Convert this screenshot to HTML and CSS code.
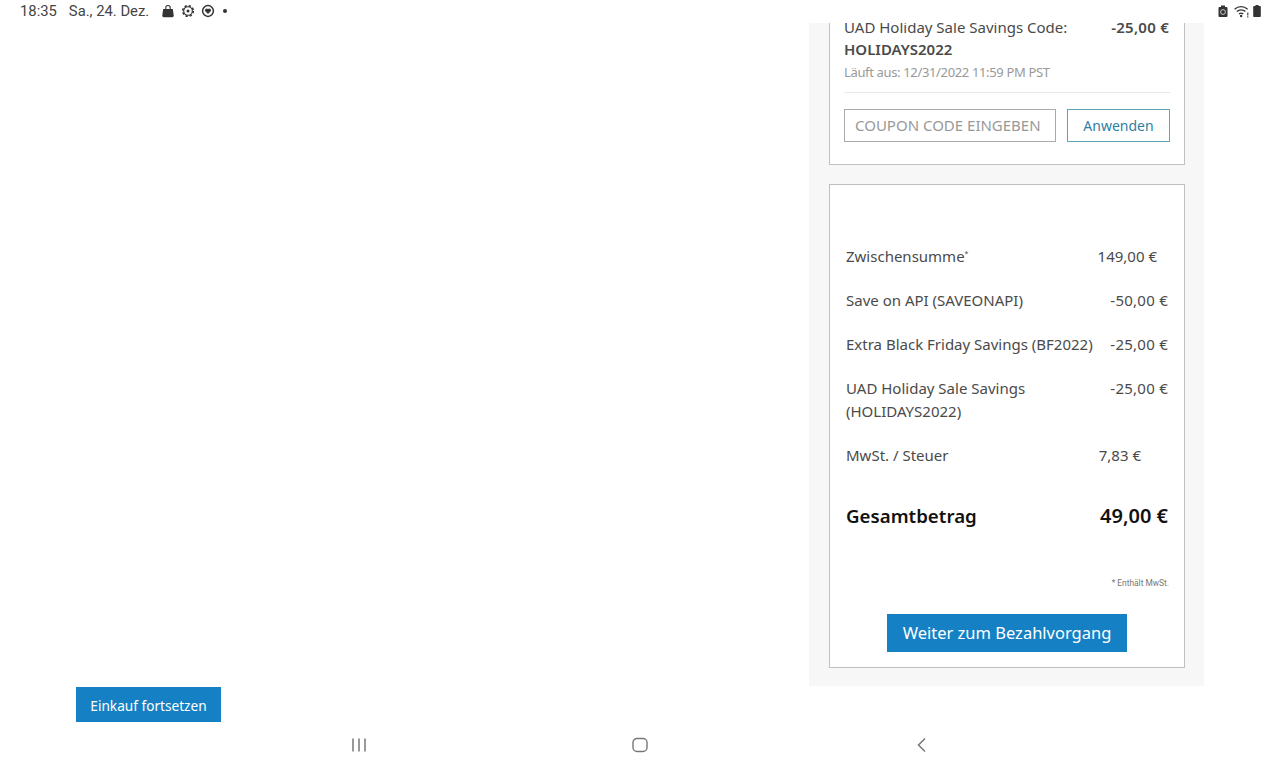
FILE: index.html
```html
<!DOCTYPE html>
<html lang="de">
<head>
    <meta charset="UTF-8">
    <title>Warenkorb</title>
    <link rel="stylesheet" href="styles.css">
</head>
<body>
    <div class="status-bar">
        <div class="status-left">
            <span class="clock">18:35</span>
            <span class="date">Sa., 24. Dez.</span>
            <div class="status-icons">
                <svg width="14" height="14" viewBox="0 0 14 14"><path d="M2.200 5h9.600l.9 6.500q.2 1.700-1.500 1.700H2.800q-1.700 0-1.500-1.700z" fill="#333"/><path d="M4.800 6V3.700a2.200 2.200 0 0 1 4.400 0V6" fill="none" stroke="#333" stroke-width="1.100"/></svg>
                <svg width="14" height="14" viewBox="0 0 14 14"><circle cx="7" cy="7" r="5.300" fill="none" stroke="#333" stroke-width="1.600" stroke-dasharray="2.300 1.860"/><circle cx="7" cy="7" r="4.300" fill="none" stroke="#333" stroke-width="1.100"/><circle cx="7" cy="7" r="1.500" fill="#333"/></svg>
                <svg width="14" height="14" viewBox="0 0 14 14"><circle cx="7" cy="7" r="5.400" fill="none" stroke="#333" stroke-width="1.500"/><path d="M7 10 4.300 7.300a1.600 1.600 0 0 1 2.700-2 1.600 1.600 0 0 1 2.700 2z" fill="#333"/></svg>
                <span class="status-dot"></span>
            </div>
        </div>
        <div class="status-right">
            <svg class="alarm-icon" width="12" height="14" viewBox="0 0 12 14"><path d="M4 1.500h4V3h1.500q1 0 1 1v8q0 1-1 1h-7q-1 0-1-1V4q0-1 1-1H4z" fill="#333"/><circle cx="6" cy="8" r="2.400" fill="none" stroke="#ccc" stroke-width="1"/></svg>
            <svg width="16" height="14" viewBox="0 0 16 14"><path d="M.6 5.200a9.500 9.500 0 0 1 13 0M2.800 7.600a6.300 6.300 0 0 1 8.600 0M5 10a3.200 3.200 0 0 1 4.200 0" fill="none" stroke="#333" stroke-width="1.300"/><circle cx="7.100" cy="12" r="1.200" fill="#333"/><path d="M13.800 8.500v3M13.800 12.200v1.300" stroke="#333" stroke-width="1.100"/></svg>
            <svg width="8" height="14" viewBox="0 0 8 14"><path d="M2.500 1h3v1H7q.8 0 .8.800v9.400q0 .8-.8.800H1q-.8 0-.8-.8V2.800Q.2 2 1 2h1.500z" fill="#333"/></svg>
        </div>
    </div>

    <div class="page">
        <div class="page-main">
            <button class="btn continue-btn">Einkauf fortsetzen</button>
        </div>

        <aside class="sidebar">
            <section class="panel coupon-panel">
                <div class="coupon-row">
                    <div class="coupon-name">UAD Holiday Sale Savings Code:<br><b>HOLIDAYS2022</b></div>
                    <div class="coupon-value">-25,00 €</div>
                </div>
                <div class="coupon-expiry">Läuft aus: 12/31/2022 11:59 PM PST</div>
                <div class="coupon-form">
                    <div class="coupon-input">COUPON CODE EINGEBEN</div>
                    <button class="apply-btn">Anwenden</button>
                </div>
            </section>

            <section class="panel summary-panel">
                <div class="sum-row">
                    <span class="sum-label">Zwischensumme<sup>*</sup></span>
                    <span class="sum-value subtotal">149,00 €</span>
                </div>
                <div class="sum-row">
                    <span class="sum-label">Save on API (SAVEONAPI)</span>
                    <span class="sum-value discount">-50,00 €</span>
                </div>
                <div class="sum-row">
                    <span class="sum-label">Extra Black Friday Savings (BF2022)</span>
                    <span class="sum-value discount">-25,00 €</span>
                </div>
                <div class="sum-row">
                    <span class="sum-label">UAD Holiday Sale Savings<br>(HOLIDAYS2022)</span>
                    <span class="sum-value discount">-25,00 €</span>
                </div>
                <div class="sum-row">
                    <span class="sum-label">MwSt. / Steuer</span>
                    <span class="sum-value tax">7,83 €</span>
                </div>
                <div class="total-row">
                    <span class="total-label">Gesamtbetrag</span>
                    <span>49,00 €</span>
                </div>
                <div class="tax-note">* Enthält MwSt.</div>
                <button class="btn checkout-btn">Weiter zum Bezahlvorgang</button>
            </section>
        </aside>
    </div>

    <nav class="nav-bar">
        <svg width="16" height="16" viewBox="0 0 16 16"><path d="M2 1.500v13M8 1.500v13M14 1.500v13" stroke="#777" stroke-width="1.500"/></svg>
        <svg width="16" height="16" viewBox="0 0 16 16"><rect x="1" y="1.500" width="14" height="13" rx="4" fill="none" stroke="#777" stroke-width="1.400"/></svg>
        <svg width="16" height="16" viewBox="0 0 16 16"><path d="M12 1.500 5.500 8l6.500 6.500" fill="none" stroke="#777" stroke-width="1.500"/></svg>
    </nav>
</body>
</html>
```

FILE: styles.css
```css
* {
    margin: 0;
    padding: 0;
    box-sizing: border-box;
}

body {
    width: 1280px;
    height: 768px;
    overflow: hidden;
    background: #fff;
    color: #4a4a4a;
    font-family: 'Noto Sans', sans-serif;
    display: flex;
    flex-direction: column;
}

.status-bar {
    height: 23px;
    flex: none;
    display: flex;
    justify-content: space-between;
    align-items: center;
    padding: 0 19px 2px 20px;
    font-family: Roboto, sans-serif;
    font-size: 14.8px;
    color: #444;
}

.status-left,
.status-right,
.status-icons {
    display: flex;
    align-items: center;
}

.clock {
    margin-right: 12px;
}

.status-icons {
    margin-left: 12px;
    gap: 6px;
}

.status-dot {
    width: 4px;
    height: 4px;
    margin-left: 2px;
    border-radius: 50%;
    background: #333;
}

.status-right {
    gap: 3px;
}

.alarm-icon {
    margin-right: 2px;
}

.page {
    flex: 1;
    display: flex;
    min-height: 0;
}

.page-main {
    width: 809px;
    display: flex;
    align-items: flex-end;
    padding-left: 76px;
}

.btn {
    background: #1581c4;
    color: #fff;
    border: none;
    font-family: 'Noto Sans', sans-serif;
}

.continue-btn {
    width: 145px;
    height: 35px;
    padding-top: 1px;
    font-size: 13.65px;
}

.sidebar {
    width: 395px;
    height: 663px;
    background: #f7f7f7;
    padding: 0 19px 0 20px;
}

.panel {
    background: #fff;
    border: 1px solid #c0c0c0;
}

/* list is scrolled, first line is cut by the status bar */
.coupon-panel {
    height: 142px;
    border-top: none;
    padding: 0 14px;
    margin-bottom: 19px;
    overflow: hidden;
}

.coupon-row {
    display: flex;
    justify-content: space-between;
    margin-top: -7px;
    font-size: 15px;
    line-height: 22px;
}

.coupon-name b {
    font-weight: 600;
}

.coupon-value {
    font-weight: 600;
    letter-spacing: 0.25px;
    margin-right: 1px;
}

.coupon-expiry {
    margin-top: 1px;
    font-size: 13px;
    letter-spacing: -0.35px;
    line-height: 22px;
    color: #999;
    padding-bottom: 9px;
    border-bottom: 1px solid #e8e8e8;
}

.coupon-form {
    display: flex;
    justify-content: space-between;
    margin-top: 16px;
}

.coupon-input {
    width: 212px;
    height: 33px;
    border: 1px solid #aaa;
    padding-left: 10px;
    font-size: 15px;
    line-height: 30px;
    color: #999;
}

.apply-btn {
    width: 103px;
    height: 33px;
    background: #fff;
    border: 1px solid #5fa3bd;
    color: #2f7fa5;
    font-family: 'Noto Sans', sans-serif;
    font-size: 14px;
}

.summary-panel {
    height: 484px;
    padding: 60px 16px 0;
}

.sum-row {
    display: flex;
    justify-content: space-between;
    font-size: 15px;
    line-height: 23px;
    margin-bottom: 21px;
}

.sum-label sup {
    font-size: 7px;
    line-height: 0;
}

.sum-value {
    white-space: nowrap;
}

.sum-value.discount {
    letter-spacing: 0.25px;
}

.sum-value.subtotal {
    margin-right: 11px;
}

.sum-value.tax {
    margin-right: 27px;
}

.total-row {
    display: flex;
    justify-content: space-between;
    margin-top: 35px;
    font-size: 20px;
    line-height: 28px;
    font-weight: 600;
    color: #111;
}

.total-label {
    font-size: 18.7px;
}

.tax-note {
    margin: 47px -1px 0 0;
    text-align: right;
    font-family: Roboto, sans-serif;
    font-size: 8.4px;
    line-height: 12px;
    color: #777;
}

.checkout-btn {
    display: block;
    width: 240px;
    height: 38px;
    margin: 25px auto 0;
    padding-bottom: 2px;
    font-size: 16.5px;
}

.nav-bar {
    height: 46px;
    flex: none;
    padding: 0 351px;
    display: flex;
    justify-content: space-between;
    align-items: center;
}
```
